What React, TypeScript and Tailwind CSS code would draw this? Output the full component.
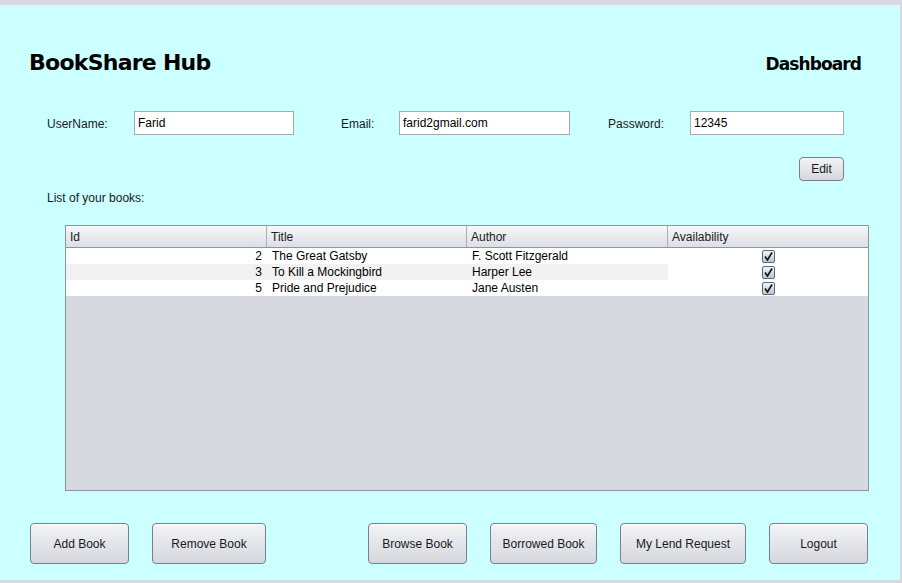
import React from 'react';

type Book = { id: number; title: string; author: string; available: boolean };

const books: Book[] = [
  { id: 2, title: 'The Great Gatsby', author: 'F. Scott Fitzgerald', available: true },
  { id: 3, title: 'To Kill a Mockingbird', author: 'Harper Lee', available: true },
  { id: 5, title: 'Pride and Prejudice', author: 'Jane Austen', available: true },
];

const Field: React.FC<{ label: string; value: string; labelW: string; inputW: string }> = ({ label, value, labelW, inputW }) => (
  <div className="flex items-center">
    <span className={`${labelW} text-[12px] text-[#1a1a1a] pt-[2px]`}>{label}</span>
    <div className={`${inputW} h-[24px] bg-white border border-[#a3aab2] flex items-center px-[3px] text-[12px] text-black`}>
      {value}
    </div>
  </div>
);

const SwingButton: React.FC<{ label: string; w: string }> = ({ label, w }) => (
  <button
    className={`${w} h-[41px] rounded-[4px] border border-[#7a8087] bg-gradient-to-b from-[#f3f4f6] via-[#e3e5ea] to-[#d5d8de] text-[12px] text-[#1a1a1a] shadow-[inset_0_1px_0_#ffffff]`}
  >
    {label}
  </button>
);

const CheckMark: React.FC = () => (
  <svg width="13" height="13" viewBox="0 0 13 13">
    <defs>
      <linearGradient id="cbg" x1="0" y1="0" x2="0" y2="1">
        <stop offset="0" stopColor="#f4f6f9" />
        <stop offset="1" stopColor="#b9c4d2" />
      </linearGradient>
    </defs>
    <rect x="0.5" y="0.5" width="12" height="12" rx="1.5" fill="url(#cbg)" stroke="#5e6875" />
    <path d="M3 6.5 L5.5 10 L10 2.5" fill="none" stroke="#111" strokeWidth="1.6" />
  </svg>
);

const App: React.FC = () => {
  return (
    <div className="w-[902px] h-[583px] flex flex-col bg-[#ccffff] overflow-hidden" style={{ fontFamily: '"Liberation Sans", Arial, sans-serif' }}>
      <div className="h-[5px] bg-[#d6d9df] flex-shrink-0" />
      <div className="flex-1 flex flex-col border-r-2 border-[#d6d9df]">
        {/* Header */}
        <div className="flex items-end justify-between pl-[29px] pr-[39px] pt-[44px]">
          <h1 className="text-[22px] font-bold text-black leading-[28px] tracking-[-0.75px]" style={{ fontFamily: '"DejaVu Sans", Verdana, sans-serif' }}>
            BookShare Hub
          </h1>
          <h2 className="text-[17px] font-bold text-black leading-[22px] mb-[2px] tracking-[-0.9px]" style={{ fontFamily: '"DejaVu Sans", Verdana, sans-serif' }}>
            Dashboard
          </h2>
        </div>

        {/* User fields */}
        <div className="flex items-center pl-[47px] mt-[34px]">
          <Field label="UserName:" value="Farid" labelW="w-[87px]" inputW="w-[160px]" />
          <div className="w-[47px]" />
          <Field label="Email:" value="farid2gmail.com" labelW="w-[58px]" inputW="w-[171px]" />
          <div className="w-[38px]" />
          <Field label="Password:" value="12345" labelW="w-[82px]" inputW="w-[154px]" />
        </div>

        <div className="flex justify-end pr-[56px] mt-[22px]">
          <button className="w-[45px] h-[24px] rounded-[4px] border border-[#7a8087] bg-gradient-to-b from-[#f3f4f6] via-[#e3e5ea] to-[#d5d8de] text-[12px] text-[#1a1a1a]">
            Edit
          </button>
        </div>

        <div className="pl-[47px] mt-[10px] text-[12px] text-[#1a1a1a] leading-[14px]">List of your books:</div>

        {/* Table */}
        <div className="ml-[65px] mt-[20px] w-[804px] h-[266px] border border-[#8c969f] bg-[#d6d9df] flex flex-col">
          <div className="flex h-[22px] bg-gradient-to-b from-[#f6f7f9] to-[#dcdfe4] border-b border-[#8c969f] text-[12px] text-[#1a1a1a]">
            <div className="w-[201px] border-r border-[#a9b0b8] pl-[4px] flex items-center">Id</div>
            <div className="w-[200px] border-r border-[#a9b0b8] pl-[4px] flex items-center">Title</div>
            <div className="w-[201px] border-r border-[#a9b0b8] pl-[4px] flex items-center">Author</div>
            <div className="flex-1 pl-[4px] flex items-center">Availability</div>
          </div>
          {books.map((b, i) => (
            <div key={b.id} className="flex h-[16px] text-[12px] text-black leading-[17px]">
              <div className={`w-[201px] text-right pr-[5px] ${i === 1 ? 'bg-[#f2f2f2]' : 'bg-white'}`}>{b.id}</div>
              <div className={`w-[200px] pl-[5px] ${i === 1 ? 'bg-[#f2f2f2]' : 'bg-white'}`}>{b.title}</div>
              <div className={`w-[201px] pl-[5px] ${i === 1 ? 'bg-[#f2f2f2]' : 'bg-white'}`}>{b.author}</div>
              <div className="flex-1 bg-white flex items-center justify-center">
                {b.available && <CheckMark />}
              </div>
            </div>
          ))}
        </div>

        {/* Actions */}
        <div className="flex items-center pl-[30px] mt-[32px]">
          <SwingButton label="Add Book" w="w-[99px]" />
          <div className="w-[23px]" />
          <SwingButton label="Remove Book" w="w-[114px]" />
          <div className="w-[102px]" />
          <SwingButton label="Browse Book" w="w-[99px]" />
          <div className="w-[23px]" />
          <SwingButton label="Borrowed Book" w="w-[107px]" />
          <div className="w-[23px]" />
          <SwingButton label="My Lend Request" w="w-[126px]" />
          <div className="w-[23px]" />
          <SwingButton label="Logout" w="w-[99px]" />
        </div>
      </div>
      <div className="h-[3px] bg-[#d6d9df] flex-shrink-0" />
    </div>
  );
};

export default App;
